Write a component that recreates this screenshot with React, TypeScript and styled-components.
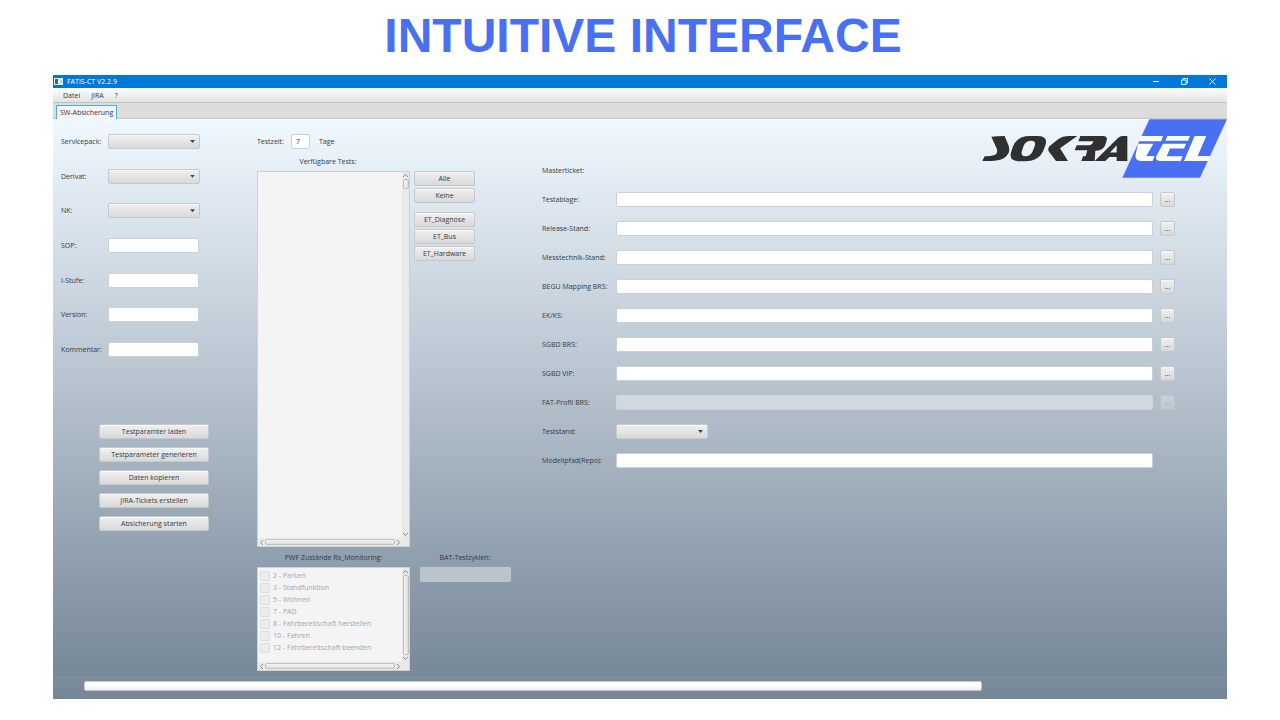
import React from "react";
import styled, { createGlobalStyle, css } from "styled-components";

const GlobalStyle = createGlobalStyle`
  * { box-sizing: border-box; }
  body { margin: 0; background: #fff; }
  button, input, select { font: inherit; color: inherit; margin: 0; padding: 0; }
`;

const Slide = styled.main`
  padding: 0 53px 21px;
  font-family: "Open Sans", "Noto Sans", sans-serif;
  font-size: 7px;
  line-height: 15px;
  color: #333a40;
`;

const Headline = styled.h1`
  margin: 0;
  padding: 8px 0 12px 6px;
  font-family: "Liberation Sans", Arial, sans-serif;
  font-size: 48px;
  line-height: 55px;
  text-align: center;
  color: #4970f2;
`;

const AppWindow = styled.section`
  display: flex;
  flex-direction: column;
`;

const TitleBar = styled.header`
  display: flex;
  align-items: center;
  height: 13px;
  padding: 0 8px 0 1px;
  gap: 4px;
  background: #0078d7;
  color: #fff;
`;

const WindowTitle = styled.span`
  flex: 1;
`;

const WindowButton = styled.button`
  display: flex;
  align-items: center;
  justify-content: center;
  width: 14px;
  height: 13px;
  margin-left: 10px;
  border: 0;
  background: none;
`;

const MenuBar = styled.nav`
  display: flex;
  gap: 11px;
  height: 15px;
  padding: 0 10px;
  background: linear-gradient(#fdfdfd, #e3e3e3);
  border-bottom: 1px solid #c4c4c4;
`;

const MenuItem = styled.button`
  border: 0;
  background: none;
  line-height: 16px;
`;

const TabStrip = styled.div`
  display: flex;
  align-items: flex-end;
  height: 16px;
  padding: 0 3px;
  background: #dcdcdc;
  box-shadow: inset 0 -1px 0 #c8c8c8;
`;

const Tab = styled.button`
  height: 14px;
  padding: 0 3px;
  border: 1px solid #45b4d2;
  border-bottom: 0;
  background: #f4f4f4;
  line-height: 14px;
`;

const Content = styled.div`
  position: relative;
  display: flex;
  align-items: flex-start;
  padding: 15px 52px 5px 8px;
  background: linear-gradient(aliceblue, lightslategray);
`;

const Logo = styled.svg`
  position: absolute;
  top: 0;
  right: 0;
  width: 247px;
  height: 59px;
`;

const LeftColumn = styled.div`
  width: 196px;
`;

const ParamForm = styled.form`
  display: flex;
  flex-direction: column;
  justify-content: space-between;
  height: 223px;
`;

const ParamRow = styled.div`
  display: grid;
  grid-template-columns: 46px 92px;
  align-items: center;
  gap: 1px;
  height: 15px;
`;

const disabledField = css`
  background: rgba(255, 255, 255, 0.4);
  border-color: rgba(200, 205, 210, 0.4);
`;

const TextField = styled.input<{ $width?: string }>`
  width: ${(p) => p.$width ?? "100%"};
  height: 15px;
  border: 1px solid #cdd0d3;
  border-radius: 2px;
  background: #fff;
  ${(p) => p.disabled && disabledField}
`;

const buttonFace = css`
  height: 15px;
  border: 1px solid #c6c8ca;
  border-radius: 2px;
  background: linear-gradient(#f0f0f0, #d9d9d9);
  box-shadow: inset 0 1px 0 #f8f8f8;
`;

const ComboWrap = styled.span`
  display: grid;
  grid-template-columns: 1fr 10px;
  align-items: center;
  width: 92px;
`;

const Combo = styled.select`
  ${buttonFace}
  appearance: none;
  grid-area: 1 / 1 / 2 / 3;
  width: 100%;
`;

const ComboArrow = styled.span`
  grid-area: 1 / 2;
  z-index: 1;
  width: 5px;
  height: 3px;
  background: #444;
  clip-path: polygon(0 0, 100% 0, 50% 100%);
  pointer-events: none;
`;

const PushButton = styled.button<{ $width: string }>`
  ${buttonFace}
  width: ${(p) => p.$width};
  line-height: 13px;
  ${(p) =>
    p.disabled &&
    css`
      opacity: 0.35;
    `}
`;

const ActionList = styled.div`
  display: flex;
  flex-direction: column;
  gap: 8px;
  margin: 67px 0 0 38px;
`;

const MiddleColumn = styled.div`
  width: 285px;
`;

const TimeRow = styled.div`
  display: flex;
  align-items: center;
  height: 15px;
`;

const TimeLabel = styled.label`
  width: 34px;
`;

const DaysField = styled(TextField)`
  margin-right: 9px;
  padding-left: 4px;
`;

const Caption = styled.div<{ $width: number }>`
  width: ${(p) => p.$width}px;
  text-align: center;
`;

const TestsCaption = styled(Caption)`
  margin: 5px 0 2px;
`;

const TestsRow = styled.div`
  display: flex;
  align-items: flex-start;
  gap: 4px;
`;

const FilterList = styled.div`
  display: flex;
  flex-direction: column;
  gap: 2px;
`;

const FilterGroup = styled(FilterList)`
  padding-top: 7px;
`;

const ScrollPane = styled.div<{ $height: number }>`
  display: grid;
  grid-template-columns: 1fr 7px;
  grid-template-rows: 1fr 8px;
  width: 153px;
  height: ${(p) => p.$height}px;
  border: 1px solid #cfd1d3;
  background: #f4f4f4;
`;

const Track = styled.div<{ $vertical?: boolean }>`
  display: flex;
  flex-direction: ${(p) => (p.$vertical ? "column" : "row")};
  align-items: center;
  background: #e9e9e9;
`;

const Thumb = styled.div<{ $vertical?: boolean; $length?: number }>`
  flex: ${(p) => (p.$length ? "none" : "1")};
  width: ${(p) => (p.$vertical ? "6px" : "auto")};
  height: ${(p) => (p.$vertical ? (p.$length ? `${p.$length}px` : "auto") : "6px")};
  border: 1px solid #c0c0c0;
  border-radius: 2px;
  background: ${(p) => (p.$vertical ? "linear-gradient(90deg, #f4f4f4, #dedede)" : "linear-gradient(#f4f4f4, #dedede)")};
`;

const Spacer = styled.div`
  flex: 1;
`;

const TrackCorner = styled.div`
  background: #e9e9e9;
`;

const LowerRow = styled.div`
  display: flex;
  align-items: flex-start;
  gap: 10px;
  margin-top: 3px;
`;

const LowerGroup = styled.div`
  display: flex;
  flex-direction: column;
  gap: 2px;
`;

const CheckList = styled.div`
  display: flex;
  flex-direction: column;
  gap: 2px;
  padding: 3px 2px 0;
`;

const CheckLabel = styled.label`
  display: flex;
  align-items: center;
  gap: 3px;
  height: 10px;
  line-height: 10px;
  color: #a3a5a7;
`;

const CheckBox = styled.input`
  appearance: none;
  width: 10px;
  height: 10px;
  border: 1px solid #dfdfdf;
  border-radius: 2px;
  background: #ececec;
`;

const FileForm = styled.form`
  display: flex;
  flex: 1;
  flex-direction: column;
  gap: 14px;
  margin-top: 29px;
`;

const FileRow = styled.div`
  display: grid;
  grid-template-columns: 67px 1fr 15px;
  column-gap: 7px;
  align-items: center;
  height: 15px;
  white-space: nowrap;
`;

const Footer = styled.footer`
  height: 23px;
  padding: 5px 245px 0 31px;
  background: linear-gradient(#7c8d9d, #748595);
`;

const ProgressTrack = styled.div`
  height: 10px;
  border: 1px solid #c5c9cd;
  border-radius: 2px;
  background: linear-gradient(#fff 50%, #ececec);
`;

type Dir = "up" | "down" | "left" | "right";
const chevrons: Record<Dir, string> = {
  up: "M1 5 L3.5 2.5 L6 5",
  down: "M1 2 L3.5 4.5 L6 2",
  left: "M5 1 L2.5 3.5 L5 6",
  right: "M2 1 L4.5 3.5 L2 6",
};

const Chevron = ({ dir }: { dir: Dir }) => (
  <svg width="7" height="7" viewBox="0 0 7 7" fill="none" stroke="#8a8a8a" strokeWidth="1">
    <path d={chevrons[dir]} />
  </svg>
);

const ComboBox = ({ id }: { id: string }) => (
  <ComboWrap>
    <Combo id={id} />
    <ComboArrow />
  </ComboWrap>
);

const HorizontalBar = () => (
  <Track>
    <Chevron dir="left" />
    <Thumb />
    <Chevron dir="right" />
  </Track>
);

const params = [
  { id: "servicepack", label: "Servicepack:", combo: true },
  { id: "derivat", label: "Derivat:", combo: true },
  { id: "nk", label: "NK:", combo: true },
  { id: "sop", label: "SOP:" },
  { id: "istufe", label: "I-Stufe:" },
  { id: "version", label: "Version:" },
  { id: "kommentar", label: "Kommentar:" },
];

const actions = [
  "Testparamter laden",
  "Testparameter generieren",
  "Daten kopieren",
  "JIRA-Tickets erstellen",
  "Absicherung starten",
];

const states = [
  "2 - Parken",
  "3 - Standfunktion",
  "5 - Wohnen",
  "7 - PAD",
  "8 - Fahrbereitschaft herstellen",
  "10 - Fahren",
  "12 - Fahrbereitschaft beenden",
];

const files = [
  { id: "testablage", label: "Testablage:" },
  { id: "release", label: "Release-Stand:" },
  { id: "messtechnik", label: "Messtechnik-Stand:" },
  { id: "begu", label: "BEGU Mapping BRS:" },
  { id: "ekks", label: "EK/KS:" },
  { id: "sgbdbrs", label: "SGBD BRS:" },
  { id: "sgbdvip", label: "SGBD VIP:" },
  { id: "fatprofil", label: "FAT-Profil BRS:", disabled: true },
];

const SokratelLogo = () => (
  <Logo viewBox="0 6 741 176" preserveAspectRatio="none" role="img" aria-label="Sokratel">
    <path fill="#4970f2" d="M508 7H741L660 181H427Z" />
    <g fill="#303030">
      <path d="M34 59Q50 57 74 57L86 86Q92 105 78 118Q64 131 36 131H7L14 117Q42 118 50 109Q54 103 50 94Z" />
      <path
        fillRule="evenodd"
        d="M150 57H172Q204 57 197 82L191 98Q178 132 136 132H120Q86 132 93 106L98 90Q110 57 150 57ZM154 71Q137 71 131 86L126 100Q121 117 136 117Q152 117 158 102L164 87Q169 71 154 71Z"
      />
      <path d="M292 57L240 93L264 131H228L206 102Q202 94 210 86L236 65Q248 57 264 57Z" />
      <path d="M301 57H368Q386 57 379 74L374 87Q368 99 346 101L344 131H304L309 117H317L322 99H284L290 84H328Q338 82 340 72H295Z" />
      <path d="M442 57V131H410V119H388L376 131H344L414 63Q420 57 428 57ZM410 84L390 106H410Z" fillRule="evenodd" />
    </g>
    <g fill="#fff">
      <path d="M483 57H549L543 72H477Z" />
      <path d="M474 80H520L499 116H524L518 131H484Q463 131 467 112Z" />
      <path d="M562 57H630L624 71H556Z" />
      <path d="M549 80H618L612 94H570L560 117H608L602 131H541Q523 131 530 115Z" />
      <path d="M644 57H679L653 116H691L684 131H612Z" />
    </g>
  </Logo>
);

export default function App() {
  return (
    <>
      <GlobalStyle />
      <Slide>
        <Headline>INTUITIVE INTERFACE</Headline>
        <AppWindow>
          <TitleBar>
            <svg width="9" height="7" viewBox="0 0 9 7">
              <rect width="9" height="7" fill="#e8f1f5" />
              <rect x="1" y="1" width="3" height="5" fill="#3f6f62" />
              <rect x="6" y="2" width="2" height="3" fill="#b9cdd8" />
            </svg>
            <WindowTitle>FATIS-CT V2.2.9</WindowTitle>
            <WindowButton aria-label="Minimieren">
              <svg width="7" height="7" stroke="#fff" fill="none"><path d="M0 3.5H6" /></svg>
            </WindowButton>
            <WindowButton aria-label="Wiederherstellen">
              <svg width="7" height="7" stroke="#fff" fill="none" strokeWidth="0.9">
                <path d="M0.5 2H5V6.5H0.5ZM2 2V0.5H6.5V5H5" />
              </svg>
            </WindowButton>
            <WindowButton aria-label="Schließen">
              <svg width="7" height="7" stroke="#fff" fill="none"><path d="M0.5 0.5L6.5 6.5M6.5 0.5L0.5 6.5" /></svg>
            </WindowButton>
          </TitleBar>
          <MenuBar>
            <MenuItem>Datei</MenuItem>
            <MenuItem>JIRA</MenuItem>
            <MenuItem>?</MenuItem>
          </MenuBar>
          <TabStrip>
            <Tab>SW-Absicherung</Tab>
          </TabStrip>
          <Content>
            <LeftColumn>
              <ParamForm>
                {params.map((p) => (
                  <ParamRow key={p.id}>
                    <label htmlFor={p.id}>{p.label}</label>
                    {p.combo ? <ComboBox id={p.id} /> : <TextField id={p.id} $width="91px" />}
                  </ParamRow>
                ))}
              </ParamForm>
              <ActionList>
                {actions.map((a) => (
                  <PushButton key={a} $width="110px">{a}</PushButton>
                ))}
              </ActionList>
            </LeftColumn>
            <MiddleColumn>
              <TimeRow>
                <TimeLabel htmlFor="testzeit">Testzeit:</TimeLabel>
                <DaysField id="testzeit" $width="19px" defaultValue="7" />
                <span>Tage</span>
              </TimeRow>
              <TestsCaption $width={142}>Verfügbare Tests:</TestsCaption>
              <TestsRow>
                <ScrollPane $height={376}>
                  <div />
                  <Track $vertical>
                    <Chevron dir="up" />
                    <Thumb $vertical $length={10} />
                    <Spacer />
                    <Chevron dir="down" />
                  </Track>
                  <HorizontalBar />
                  <TrackCorner />
                </ScrollPane>
                <FilterList>
                  <PushButton $width="61px">Alle</PushButton>
                  <PushButton $width="61px">Keine</PushButton>
                  <FilterGroup>
                    <PushButton $width="61px">ET_Diagnose</PushButton>
                    <PushButton $width="61px">ET_Bus</PushButton>
                    <PushButton $width="61px">ET_Hardware</PushButton>
                  </FilterGroup>
                </FilterList>
              </TestsRow>
              <LowerRow>
                <LowerGroup>
                  <Caption $width={153}>PWF Zustände Rx_Monitoring:</Caption>
                  <ScrollPane $height={104}>
                    <CheckList>
                      {states.map((s) => (
                        <CheckLabel key={s}>
                          <CheckBox type="checkbox" disabled />
                          {s}
                        </CheckLabel>
                      ))}
                    </CheckList>
                    <Track $vertical>
                      <Chevron dir="up" />
                      <Thumb $vertical />
                      <Chevron dir="down" />
                    </Track>
                    <HorizontalBar />
                    <TrackCorner />
                  </ScrollPane>
                </LowerGroup>
                <LowerGroup>
                  <Caption as="label" htmlFor="bat" $width={90}>BAT-Testzyklen:</Caption>
                  <TextField id="bat" $width="91px" disabled />
                </LowerGroup>
              </LowerRow>
            </MiddleColumn>
            <FileForm>
              <FileRow>
                <span>Masterticket:</span>
              </FileRow>
              {files.map((f) => (
                <FileRow key={f.id}>
                  <label htmlFor={f.id}>{f.label}</label>
                  <TextField id={f.id} disabled={f.disabled} />
                  <PushButton type="button" $width="15px" disabled={f.disabled} aria-label={`${f.label} auswählen`}>
                    ...
                  </PushButton>
                </FileRow>
              ))}
              <FileRow>
                <label htmlFor="teststand">Teststand:</label>
                <ComboBox id="teststand" />
              </FileRow>
              <FileRow>
                <label htmlFor="modellpfad">Modellpfad(Repo):</label>
                <TextField id="modellpfad" />
              </FileRow>
            </FileForm>
            <SokratelLogo />
          </Content>
          <Footer>
            <ProgressTrack role="progressbar" aria-label="Fortschritt" aria-valuenow={0} />
          </Footer>
        </AppWindow>
      </Slide>
    </>
  );
}
